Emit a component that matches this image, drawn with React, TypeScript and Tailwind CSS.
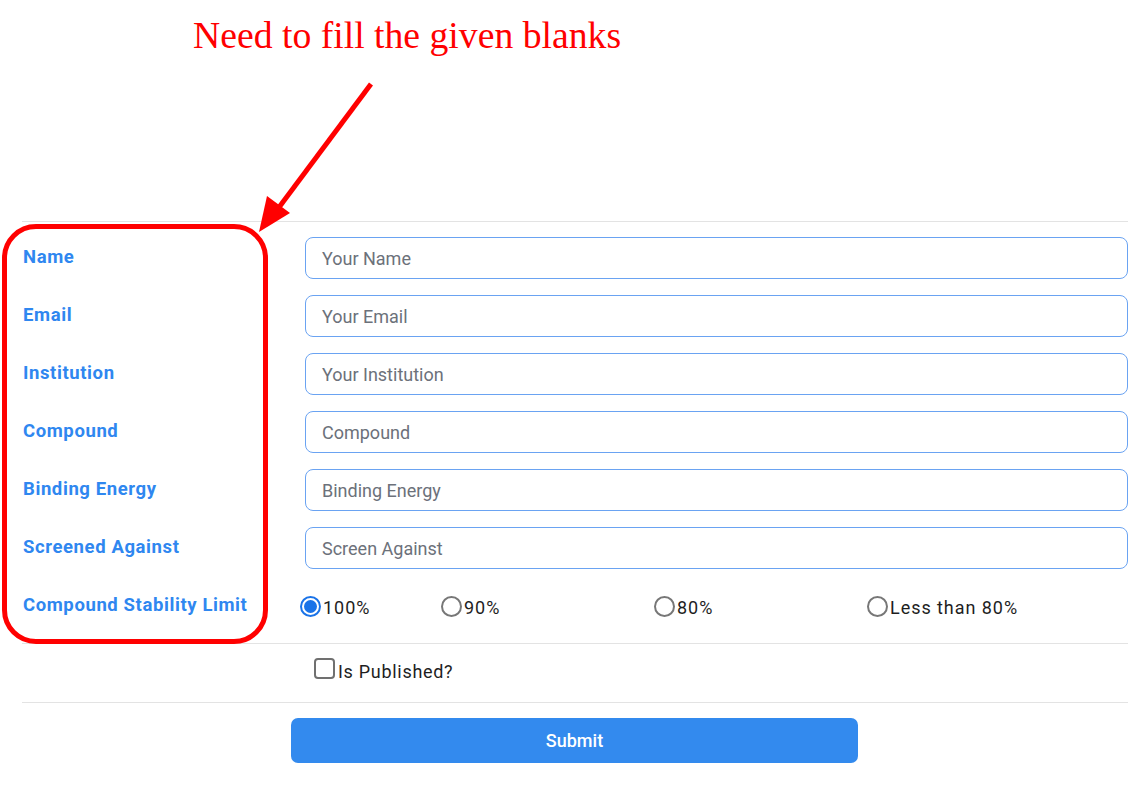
import React from "react";

const fields = [
  { label: "Name", ph: "Your Name" },
  { label: "Email", ph: "Your Email" },
  { label: "Institution", ph: "Your Institution" },
  { label: "Compound", ph: "Compound" },
  { label: "Binding Energy", ph: "Binding Energy" },
  { label: "Screened Against", ph: "Screen Against" },
];

const radios = [
  { label: "100%", w: "w-[141px]", checked: true },
  { label: "90%", w: "w-[213px]", checked: false },
  { label: "80%", w: "w-[213px]", checked: false },
  { label: "Less than 80%", w: "w-[200px]", checked: false },
];

export default function App() {
  return (
    <div className="relative w-[1144px] h-[807px] bg-white overflow-hidden font-['Roboto',sans-serif]">
      <div className="pt-[12px] pl-[193px] h-[221px]">
        <div className="font-['Liberation_Serif',serif] text-[37.7px] leading-[46px] text-[#ff0000]">
          Need to fill the given blanks
        </div>
      </div>

      <div className="ml-[22px] mr-[16px] border-t border-[#e3e3e3]">
        <div className="pt-[15px] flex flex-col gap-[16px]">
          {fields.map((f) => (
            <div key={f.label} className="flex items-center h-[42px]">
              <div className="w-[283px] pl-[1px] -mt-[1px] text-[18.5px] tracking-[0.6px] font-bold text-[#2f87f0]">{f.label}</div>
              <div className="flex-1 h-[42px] border border-[#6aa3f2] rounded-[8px] flex items-center pl-[16px] text-[18px] text-[#6c717a]">
                {f.ph}
              </div>
            </div>
          ))}
          <div className="flex items-center h-[42px]">
            <div className="w-[278px] pl-[1px] -mt-[1px] text-[18.5px] tracking-[0.6px] font-bold text-[#2f87f0] whitespace-nowrap">Compound Stability Limit</div>
            <div className="flex items-center">
              {radios.map((r) => (
                <div key={r.label} className={`${r.w} flex items-center`}>
                  {r.checked ? (
                    <span className="w-[21px] h-[21px] rounded-full border-[2px] border-[#1a73e8] flex items-center justify-center">
                      <span className="w-[13px] h-[13px] rounded-full bg-[#1a73e8]"></span>
                    </span>
                  ) : (
                    <span className="w-[21px] h-[21px] rounded-full border-[2px] border-[#777777]"></span>
                  )}
                  <span className="ml-[2px] mt-[2px] text-[18px] tracking-[0.95px] text-[#1e1e1e] whitespace-nowrap">{r.label}</span>
                </div>
              ))}
            </div>
          </div>
        </div>
        <div className="mt-[16px] border-t border-[#e3e3e3] h-[59px] flex items-start pt-[14px] pl-[292px]">
          <span className="w-[21px] h-[21px] rounded-[4px] border-[2px] border-[#707070]"></span>
          <span className="ml-[3px] mt-[2px] text-[18px] leading-[24px] tracking-[0.7px] text-[#1e1e1e]">Is Published?</span>
        </div>
        <div className="border-t border-[#e3e3e3] pt-[15px] pl-[269px]">
          <button className="w-[567px] h-[45px] rounded-[7px] bg-[#338aee] text-white text-[18px] font-medium">
            Submit
          </button>
        </div>
      </div>

      {/* annotation: red rounded box */}
      <div className="absolute left-[2px] top-[224px] w-[266px] h-[420px] border-[5px] border-[#ff0000] rounded-[34px]"></div>
      {/* annotation: arrow */}
      <svg className="absolute left-0 top-0" width="1144" height="807" viewBox="0 0 1144 807">
        <line x1="371" y1="84" x2="277" y2="210" stroke="#ff0000" strokeWidth="5" />
        <polygon points="259,232 267,196 290,213" fill="#ff0000" />
      </svg>
    </div>
  );
}
